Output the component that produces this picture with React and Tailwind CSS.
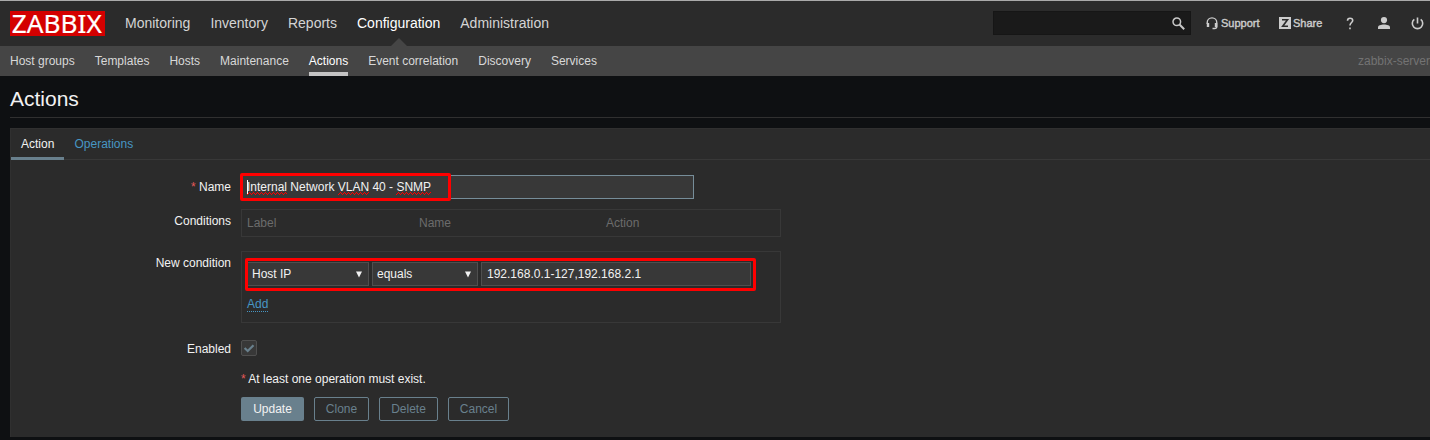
const mainNav = ["Monitoring", "Inventory", "Reports", "Configuration", "Administration"];
const subNav = ["Host groups", "Templates", "Hosts", "Maintenance", "Actions", "Event correlation", "Discovery", "Services"];

function Header() {
  return (
    <header className="flex h-[46px] items-center border-t border-[#aaaaaa] bg-[#2b2b2b] pl-[10px]">
      <svg className="h-[25px] w-[95px] shrink-0 overflow-visible" viewBox="0 0 95 25">
        <rect width="95" height="25" fill="#d40000" />
        <text x="1.8" y="21.600" fill="#fff" stroke="#fff" strokeWidth="0.2" fontSize="25.2" textLength="90" lengthAdjust="spacingAndGlyphs" fontFamily="'Noto Sans', 'Open Sans', sans-serif">ZABBIX</text>
      </svg>
      <nav className="ml-5 flex h-full gap-5 text-[14px]">
        {mainNav.map((t) => (
          <a key={t} className={t === "Configuration" ? "relative flex h-full items-center pb-[2px] text-white" : "flex h-full items-center pb-[2px] text-[#d4d4d4]"}>
            {t}
            {t === "Configuration" && (
              <svg className="absolute bottom-0 left-1/2 -ml-2 h-2 w-4" viewBox="0 0 16 8"><path d="M0 8 8 0l8 8z" fill="#454545" /></svg>
            )}
          </a>
        ))}
      </nav>
      <div className="mb-px ml-auto flex h-6 w-[198px] shrink-0 items-center justify-end border border-[#161616] bg-[#1a1a1a] pr-[5px]">
        <svg width="13" height="13" viewBox="0 0 13 13" fill="none" stroke="#c8c8c8">
          <circle cx="4.8" cy="4.8" r="3.8" strokeWidth="1.5" />
          <path d="m7.5 7.5 4.7 4.7" strokeWidth="2" />
        </svg>
      </div>
      <div className="mb-px ml-[15px] flex shrink-0 items-center text-[11px] text-[#cccccc]">
        <svg className="mr-[3px]" width="12" height="13" viewBox="0 0 12 13" fill="none" stroke="#cccccc">
          <path d="M1.2 7V5.7a4.8 4.8 0 0 1 9.6 0V9.5q0 2-2.3 2H6.500" strokeWidth="1.4" />
          <path d="M2 6v4M10 6v4" strokeWidth="2.4" />
        </svg>
        <span className="w-[39px] [-webkit-text-stroke:0.4px_#cccccc]">Support</span>
        <svg className="ml-[19px] mr-[2px]" width="12" height="12" viewBox="0 0 12 12">
          <rect width="12" height="12" fill="#cccccc" />
          <path d="M3 2.800h5.500L3.700 9.200H9" fill="none" stroke="#2b2b2b" strokeWidth="1.6" />
        </svg>
        <span className="w-[30px] [-webkit-text-stroke:0.4px_#cccccc]">Share</span>
        <svg className="ml-[23px]" width="8" height="13" viewBox="0 0 8 13" fill="none" stroke="#cccccc">
          <path d="M1.500 3.800C1.500 2 2.300 1.200 4 1.200s2.700.8 2.700 2.200c0 2-2.700 2.300-2.700 5.100M4 10.500v1.800" strokeWidth="1.6" />
        </svg>
        <svg className="ml-[24px]" width="12" height="12" viewBox="0 0 12 12" fill="#cccccc">
          <circle cx="6" cy="3.100" r="3.100" /><path d="M0 12v-1.700C0 8.400 3 7.500 6 7.500s6 .9 6 2.800V12z" />
        </svg>
        <svg className="ml-[21px] mr-[6px]" width="13" height="13" viewBox="0 0 13 13" fill="none" stroke="#cccccc">
          <path d="M3.300 2.300a5.200 5.200 0 1 0 6.400 0M6.500 .5v6" strokeWidth="1.6" />
        </svg>
      </div>
    </header>
  );
}

function SubNav() {
  return (
    <nav className="flex h-[30px] gap-5 bg-[#454545] pl-[10px]">
      {subNav.map((t) => (
        <a key={t} className={t === "Actions" ? "border-b-4 border-[#c4c4c4] pt-[6px] text-white" : "pt-[6px] text-[#d8d8d8]"}>{t}</a>
      ))}
      <span className="ml-auto pt-[6px] text-[#737373]">zabbix-server</span>
    </nav>
  );
}

const Star = () => <span className="text-[#e45959]">*</span>;

function Row({ label, className, children }) {
  return (
    <div className={"flex " + className}>
      <div className="mr-[10px] w-[220px] shrink-0 pt-[3px] text-right">{label}</div>
      {children}
    </div>
  );
}

function Select({ value, className }) {
  return (
    <div className={"flex h-6 items-center justify-between border border-[#4f4f4f] bg-[#383838] pl-1 pr-[6px] " + className}>
      {value}
      <svg width="6" height="7" viewBox="0 0 6 7"><path d="M0 .5h6L3 6.500z" fill="#f2f2f2" /></svg>
    </div>
  );
}

function Misspelt({ children }) {
  return (
    <span className="relative inline-block">
      {children}
      <svg className="absolute left-0 top-[14px] h-[3px] w-full" stroke="#ff0000" shapeRendering="crispEdges">
        <line x1="0" x2="100%" y1="0.5" y2="0.5" strokeDasharray="1 3" strokeDashoffset="-2" />
        <line x1="0" x2="100%" y1="1.5" y2="1.5" strokeDasharray="1 1" strokeDashoffset="-1" />
        <line x1="0" x2="100%" y1="2.5" y2="2.5" strokeDasharray="1 3" />
      </svg>
    </span>
  );
}

export default function App() {
  return (
    <div className="h-[440px] w-[1430px] overflow-hidden whitespace-nowrap bg-[#0e1012] font-['Liberation_Sans',Arial,sans-serif] text-[12px] leading-[18px] text-[#f2f2f2]">
      <Header />
      <SubNav />
      <h1 className="ml-[10px] h-[42px] border-b border-[#303030] pt-[10px] text-[21px] leading-[26px]">Actions</h1>
      <main className="ml-[10px] mt-[10px] h-[309px] border-l border-t border-[#303030] bg-[#2b2b2b]">
        <div className="flex h-[31px] border-b border-[#383838]">
          <div className="h-[31px] w-[53px] border-b-[3px] border-[#69808d] pl-[10px] pt-[6px]">Action</div>
          <div className="ml-[10.500px] pt-[6px] text-[#4796c4]">Operations</div>
        </div>
        <Row className="mt-[15px] h-[34px]" label={<><Star /> Name</>}>
          <div className="relative flex h-6 w-[453px] items-center border border-[#768d99] bg-[#383838] pl-[5px]">
            <span><Misspelt>Internal</Misspelt> Network <Misspelt>VLAN</Misspelt> 40 - <Misspelt>SNMP</Misspelt></span>
            <i className="absolute left-[5px] top-[4px] h-[14px] w-px bg-white" />
            <i className="absolute -left-[2px] -top-[3px] h-[28px] w-[211px] rounded-[2px] border-[3px] border-[#ff0000]" />
          </div>
        </Row>
        <Row className="h-[42px]" label="Conditions">
          <div className="flex h-7 w-[540px] border border-[#383838] pl-[5px] pt-[4px] text-[#6c6c6c]">
            <span className="w-[172px]">Label</span>
            <span className="w-[187px]">Name</span>
            <span>Action</span>
          </div>
        </Row>
        <Row className="h-[87px]" label="New condition">
          <div className="h-[72px] w-[540px] border border-[#383838] pl-[5px] pt-[10px]">
            <div className="relative flex gap-[3px]">
              <Select value="Host IP" className="w-[122px]" />
              <Select value="equals" className="w-[106px]" />
              <div className="flex h-6 w-[270px] items-center border border-[#4f4f4f] bg-[#383838] pl-[5px]">192.168.0.1-127,192.168.2.1</div>
              <i className="absolute -left-[2px] -top-[4px] h-[33px] w-[511px] rounded-[2px] border-[3px] border-[#ff0000]" />
            </div>
            <a className="mt-[10px] inline-block h-[16px] border-b border-dotted border-[#4796c4] leading-[16px] text-[#4796c4]">Add</a>
          </div>
        </Row>
        <div className="flex h-[32px]">
          <div className="mr-[10px] w-[220px] pt-[2px] text-right">Enabled</div>
          <svg className="mt-[2px]" width="16" height="16" viewBox="0 0 16 16">
            <rect x=".5" y=".5" width="15" height="15" rx="1.500" fill="#383838" stroke="#4f4f4f" />
            <path d="M3.600 8 6.700 11 12.500 5.200" fill="none" stroke="#69808d" strokeWidth="2.200" />
          </svg>
        </div>
        <div className="ml-[230px] h-[27px]"><Star /> At least one operation must exist.</div>
        <div className="ml-[230px] flex gap-[10px] text-[#69808d]">
          <button className="h-6 w-[63px] rounded-[2px] bg-[#69808d] text-[#f2f2f2]">Update</button>
          <button className="h-6 w-[55px] rounded-[2px] border border-[#69808d]">Clone</button>
          <button className="h-6 w-[59px] rounded-[2px] border border-[#69808d]">Delete</button>
          <button className="h-6 w-[61px] rounded-[2px] border border-[#69808d]">Cancel</button>
        </div>
      </main>
    </div>
  );
}
